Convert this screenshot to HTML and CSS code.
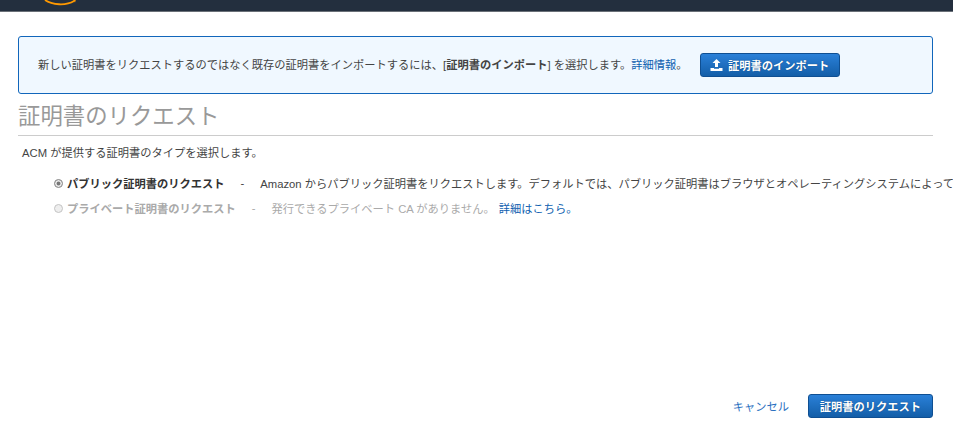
FILE: index.html
```html
<!DOCTYPE html>
<html lang="ja">
<head>
<meta charset="utf-8">
<title>証明書のリクエスト</title>
<link rel="stylesheet" href="styles.css">
</head>
<body>
<header class="topbar">
  <svg class="smile" width="34" height="6" viewBox="0 0 34 6"><path d="M1 0C8 5 22 6 30 1" fill="none" stroke="#f90" stroke-width="1.8"/><path d="M29 0l3-.5-1 3" fill="#f90"/></svg>
</header>
<main class="page">
  <div class="notice">
    <p class="notice-text">新しい証明書をリクエストするのではなく既存の証明書をインポートするには、[<b>証明書のインポート</b>] を選択します。<a href="#">詳細情報</a>。</p>
    <button class="btn btn-import" type="button">
      <svg width="13" height="12" viewBox="0 0 13 12"><path d="M6.5 0L10.5 4H8V8H5V4H2.500Z M0.500 9H4V9.800H9V9H12.500V12H0.500Z" fill="#fff"/></svg>
      証明書のインポート
    </button>
  </div>
  <h1 class="title">証明書のリクエスト</h1>
  <p class="intro">ACM が提供する証明書のタイプを選択します。</p>
  <div class="options">
    <div class="option">
      <span class="radio radio-on"></span><b class="opt-name">パブリック証明書のリクエスト</b><span class="dash">-</span><span class="opt-desc">Amazon からパブリック証明書をリクエストします。デフォルトでは、パブリック証明書はブラウザとオペレーティングシステムによって信頼されます。</span>
    </div>
    <div class="option option-off">
      <span class="radio"></span><b class="opt-name">プライベート証明書のリクエスト</b><span class="dash">-</span><span class="opt-desc">発行できるプライベート CA がありません。</span><a class="more" href="#">詳細はこちら。</a>
    </div>
  </div>
  <div class="actions">
    <a class="cancel" href="#">キャンセル</a>
    <button class="btn btn-request" type="button">証明書のリクエスト</button>
  </div>
</main>
</body>
</html>
```
FILE: styles.css
```css
* { box-sizing: border-box; }
html, body { margin: 0; height: 429px; overflow: hidden; background: #fff; }
body {
  font-family: "Liberation Sans", "Noto Sans CJK JP", sans-serif;
  font-size: 11.25px;
  color: #444;
}
a { color: #0f5fb0; text-decoration: none; }
p { margin: 0; }
.topbar {
  height: 12px;
  background: #232f3e;
  border-bottom: 1px solid #6a7078;
  padding-left: 44px;
  overflow: hidden;
}
.smile { display: block; }
.page {
  display: flex;
  flex-direction: column;
  height: 417px;
  padding: 24px 20px 0 18px;
}
.notice {
  display: flex;
  align-items: center;
  height: 58px;
  padding: 0 19px;
  background: #f0f8ff;
  border: 1px solid #1166bb;
  border-radius: 3px;
}
.notice-text { white-space: nowrap; line-height: 16px; }
.notice-text b { color: #444; }
.btn {
  border: 1px solid #0f4f92;
  border-radius: 3px;
  background: linear-gradient(#2a80d8, #135ea8);
  color: #fff;
  font: bold 11.25px "Liberation Sans", "Noto Sans CJK JP", sans-serif;
  text-shadow: 0 0 1px #0b3f75;
  display: flex;
  align-items: center;
  justify-content: center;
  padding: 0;
}
.btn-import { width: 140px; height: 24px; margin-left: 12px; gap: 5px; flex: none; }
.title {
  margin: 10px 0 0;
  height: 32px;
  border-bottom: 1px solid #ccc;
  font-size: 22.4px;
  font-weight: 400;
  line-height: 26px;
  color: #999;
  white-space: nowrap;
}
.intro { margin: 9px 0 0 4px; line-height: 16px; color: #444; }
.options { margin: 12px 0 0 36px; width: 1100px; }
.option { display: flex; align-items: center; height: 20px; white-space: nowrap; margin-bottom: 5px; }
.radio {
  width: 9px; height: 9px; margin-right: 4px; border-radius: 50%;
  background: #eee; border: 1px solid #c4c4c4; flex: none;
}
.radio-on { background: #777; box-shadow: inset 0 0 0 1.5px #eee; border-color: #999; }
.opt-name { color: #333; }
.dash { margin: 0 16px; }
.option-off, .option-off .opt-name { color: #aaa; }
.more { margin-left: 4px; }
.actions { margin-top: auto; margin-bottom: 11px; display: flex; justify-content: flex-end; align-items: center; gap: 19px; }
.cancel { color: #2a6fc0; }
.btn-request { width: 125px; height: 24px; }
```
